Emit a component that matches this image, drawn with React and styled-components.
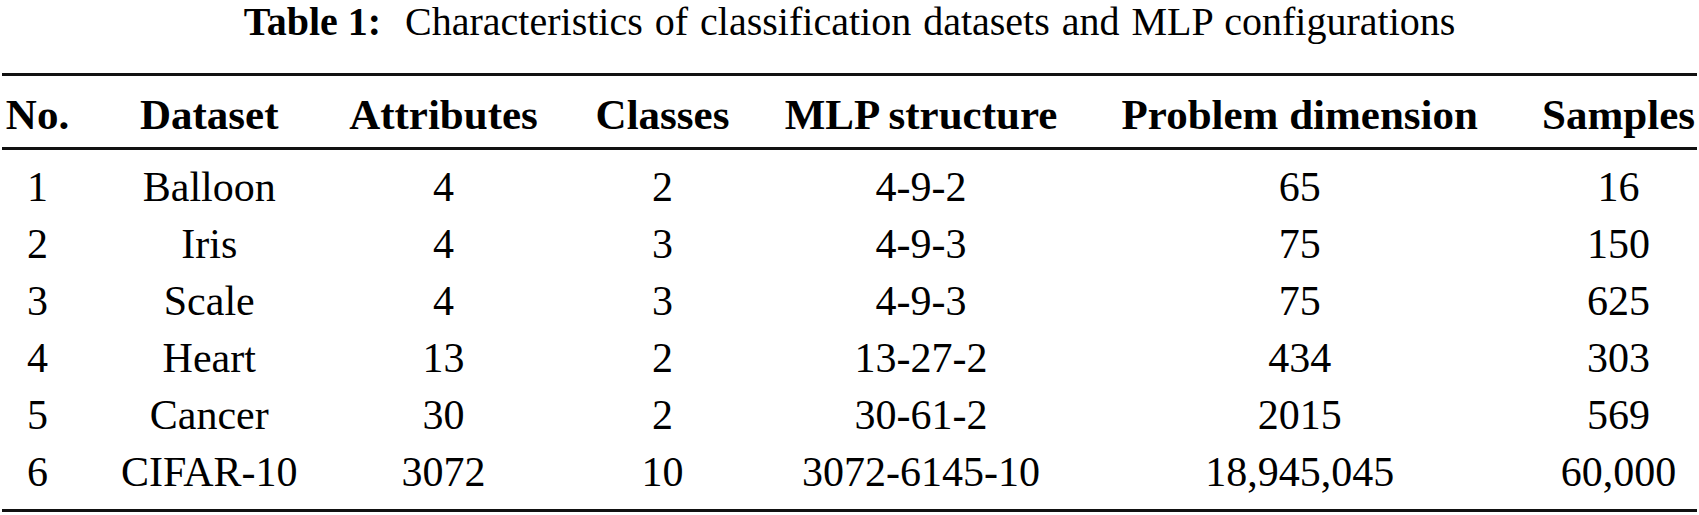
import React from "react";
import styled, { createGlobalStyle } from "styled-components";

const headers = [
  "No.",
  "Dataset",
  "Attributes",
  "Classes",
  "MLP structure",
  "Problem dimension",
  "Samples",
];

const rows = [
  ["1", "Balloon", "4", "2", "4-9-2", "65", "16"],
  ["2", "Iris", "4", "3", "4-9-3", "75", "150"],
  ["3", "Scale", "4", "3", "4-9-3", "75", "625"],
  ["4", "Heart", "13", "2", "13-27-2", "434", "303"],
  ["5", "Cancer", "30", "2", "30-61-2", "2015", "569"],
  ["6", "CIFAR-10", "3072", "10", "3072-6145-10", "18,945,045", "60,000"],
];

// edge columns have no outer padding, like @{} in latex
const edge = (i, len) => (i === 0 ? "first" : i === len - 1 ? "last" : "");

const App = () => {
  return (
    <>
      <GlobalStyle />
      <Page>
        <Caption>
          <CaptionLabel>Table 1:</CaptionLabel>
          &nbsp; Characteristics of classification datasets and MLP configurations
        </Caption>
        <Table>
          <HeadRow>
            {headers.map((h, i) => (
              <Cell key={h} $edge={edge(i, headers.length)}>
                {h}
              </Cell>
            ))}
          </HeadRow>
          <Body>
            {rows.map((row) => (
              <Row key={row[0]}>
                {row.map((value, i) => (
                  <Cell key={i} $edge={edge(i, row.length)}>
                    {value}
                  </Cell>
                ))}
              </Row>
            ))}
          </Body>
        </Table>
      </Page>
    </>
  );
};
export default App;

const GlobalStyle = createGlobalStyle`
  html, body {
    margin: 0;
    padding: 0;
    background: #ffffff;
  }
  body {
    font-family: "Liberation Serif", "Times New Roman", serif;
    color: #000000;
  }
`;

const Page = styled.div`
  width: 1699px;
  display: flex;
  flex-direction: column;
  align-items: center;
`;

const Caption = styled.div`
  font-size: 40px;
  line-height: 44px;
  word-spacing: 2px;
  margin-bottom: 29px;
  white-space: nowrap;
  text-align: center;
`;

const CaptionLabel = styled.b`
  font-weight: 700;
  word-spacing: 0;
`;

const Table = styled.div`
  width: 1695px;
  display: flex;
  flex-direction: column;
`;

const Row = styled.div`
  display: grid;
  grid-template-columns: 98px 218.5px 250px 188px 329px 428.5px 183px;
  font-size: 42px;
  line-height: 57px;
  height: 57px;
`;

const HeadRow = styled(Row)`
  font-weight: 700;
  font-size: 43px;
  line-height: 50px;
  height: 50px;
  padding: 13.5px 0 7.5px;
  border-top: 3px solid #111111;
  border-bottom: 3px solid #111111;
`;

const Body = styled.div`
  display: flex;
  flex-direction: column;
  padding: 9.3px 0 8.2px;
  border-bottom: 3px solid #111111;
`;

const Cell = styled.div`
  text-align: center;
  white-space: nowrap;
  padding: ${({ $edge }) =>
    $edge === "first" ? "0 30px 0 3px" : $edge === "last" ? "0 0 0 26px" : "0"};
`;
